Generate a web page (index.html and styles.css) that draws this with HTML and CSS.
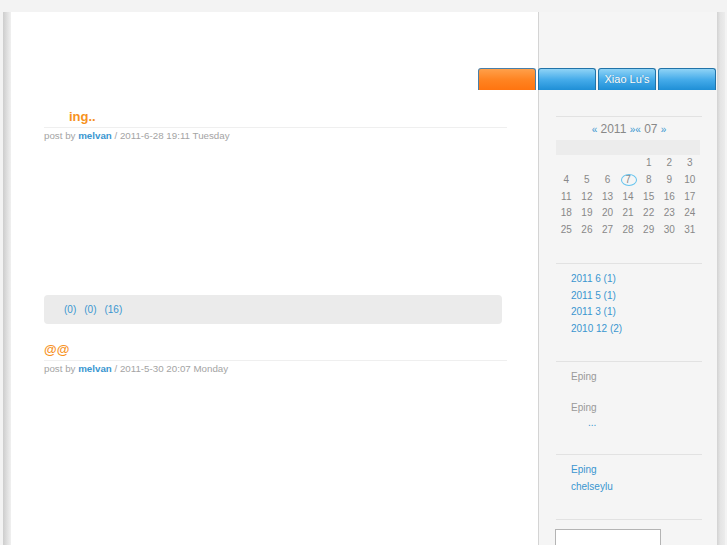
FILE: index.html
```html
<!DOCTYPE html>
<html>
<head>
<meta charset="utf-8">
<link rel="stylesheet" href="styles.css">
</head>
<body>
<div class="page">
  <div class="shadow-l"></div>
  <div class="inner">
    <div class="header">
      <a class="tab active"></a>
      <a class="tab"></a>
      <a class="tab">Xiao Lu's</a>
      <a class="tab"></a>
    </div>
    <div class="cols">
      <div class="main">
        <div class="post">
          <h2 class="title indent">ing..</h2>
          <div class="meta">post by <a class="author">melvan</a> / 2011-6-28 19:11 Tuesday</div>
          <div class="body"></div>
          <div class="foot"><a>(0)</a><a>(0)</a><a>(16)</a></div>
        </div>
        <div class="post">
          <h2 class="title">@@</h2>
          <div class="meta">post by <a class="author">melvan</a> / 2011-5-30 20:07 Monday</div>
        </div>
      </div>
      <div class="side">
        <div class="sec cal">
          <div class="cal-head"><a class="arr">«</a> 2011 <a class="arr">»«</a> 07 <a class="arr">»</a></div>
          <div class="cal-week"></div>
          <div class="days">
            <span></span><span></span><span></span><span></span><span>1</span><span>2</span><span>3</span>
            <span>4</span><span>5</span><span>6</span><span class="today">7</span><span>8</span><span>9</span><span>10</span>
            <span>11</span><span>12</span><span>13</span><span>14</span><span>15</span><span>16</span><span>17</span>
            <span>18</span><span>19</span><span>20</span><span>21</span><span>22</span><span>23</span><span>24</span>
            <span>25</span><span>26</span><span>27</span><span>28</span><span>29</span><span>30</span><span>31</span>
          </div>
        </div>
        <div class="sec arch">
          <a>2011 6 (1)</a>
          <a>2011 5 (1)</a>
          <a>2011 3 (1)</a>
          <a>2010 12 (2)</a>
        </div>
        <div class="sec comments">
          <div class="grey">Eping</div>
          <div class="grey second">Eping</div>
          <a class="more">...</a>
        </div>
        <div class="sec links">
          <a>Eping</a>
          <a>chelseylu</a>
        </div>
        <div class="sec search">
          <input class="box" type="text">
        </div>
      </div>
    </div>
  </div>
  <div class="shadow-r"></div>
</div>
</body>
</html>
```
FILE: styles.css
```css
html, body {
  margin: 0;
  padding: 0;
}
body {
  background: #f3f3f3;
  font-family: "Liberation Sans", Arial, sans-serif;
  font-size: 10px;
  color: #999;
  overflow: hidden;
}
a {
  color: #3a96d0;
  text-decoration: none;
}
.page {
  display: flex;
  margin: 12px 0 0 3px;
  height: 560px;
}
.shadow-l {
  width: 8px;
  background: linear-gradient(to right, #cdcdcd, #e6e6e6 70%, #f0f0f0);
}
.shadow-r {
  width: 8px;
  background: linear-gradient(to right, #d2d2d2, #e4e4e4 40%, #ececec);
}
.inner {
  width: 706px;
  background: linear-gradient(to right, #fff 0, #fff 527px, #d4d4d4 527px, #d4d4d4 528px, #f5f5f5 528px);
}
.header {
  height: 78px;
  display: flex;
  justify-content: flex-end;
  align-items: flex-end;
  gap: 2px;
  padding-right: 1px;
  box-sizing: border-box;
}
.tab {
  width: 58px;
  height: 22px;
  box-sizing: border-box;
  border: 1px solid #2173a8;
  border-bottom: none;
  border-radius: 3px 3px 0 0;
  background: linear-gradient(#8fd3f6, #46acea 50%, #1f8fd6);
  color: #fff;
  font-size: 11px;
  line-height: 21px;
  text-align: center;
  text-shadow: 0 0 1px rgba(0,0,0,0.25);
}
.tab.active {
  border-color: #4a7fa8;
  background: linear-gradient(#ffa04a, #ff8422 50%, #ff7410);
}
.cols {
  display: grid;
  grid-template-columns: 527px 179px;
}
.main {
  padding: 18px 31px 0 33px;
}
.title {
  margin: 0;
  font-size: 13px;
  font-weight: bold;
  line-height: 18px;
  color: #f7921e;
  padding-bottom: 1px;
  border-bottom: 1px solid #efefef;
}
.title.indent {
  padding-left: 25px;
}
.meta {
  padding-top: 1px;
  line-height: 14px;
  font-size: 9.75px;
  color: #a4a4a4;
}
.author {
  font-weight: bold;
}
.body {
  height: 152px;
}
.foot {
  height: 29px;
  margin-right: 5px;
  border-radius: 4px;
  background: #ebebeb;
  display: flex;
  align-items: center;
  gap: 8px;
  padding-left: 20px;
  margin-bottom: 17px;
}
.post + .post .title {
  padding-bottom: 1px;
}
.side {
  padding: 26px 15px 0 18px;
}
.sec {
  border-top: 1px solid #e2e2e2;
}
.cal-head {
  padding-top: 5px;
  line-height: 14px;
  text-align: center;
  font-size: 12px;
  color: #888;
}
.cal-head .arr {
  font-size: 10px;
}
.cal-week {
  margin-top: 3px;
  height: 15px;
  width: 144px;
  background: #ececec;
}
.days {
  display: grid;
  grid-template-columns: repeat(7, 20.6px);
  grid-auto-rows: 16.8px;
  width: 144px;
  color: #888;
  text-align: center;
  line-height: 16px;
  margin-bottom: 24px;
}
.today {
  position: relative;
}
.today::after {
  content: "";
  position: absolute;
  left: 3px;
  top: 2px;
  width: 14px;
  height: 10px;
  border: 1px solid #62c3ee;
  border-radius: 50%;
}
.arch {
  padding: 7px 0 23px 15px;
}
.arch a {
  display: block;
  line-height: 16.7px;
}
.comments {
  padding: 7px 0 24px 15px;
  line-height: 16px;
}
.comments .second {
  margin-top: 15px;
}
.comments .more {
  display: block;
  padding-left: 17px;
  line-height: 14px;
}
.links {
  padding: 6px 0 24px 15px;
}
.links a {
  display: block;
  line-height: 17px;
  font-size: 10px;
}
.search {
  padding-top: 9px;
}
.box {
  display: block;
  margin: 0 0 0 -1px;
  width: 106px;
  height: 24px;
  box-sizing: border-box;
  border: 1px solid #b4b4b4;
  background: #fff;
  padding: 0;
}
```
